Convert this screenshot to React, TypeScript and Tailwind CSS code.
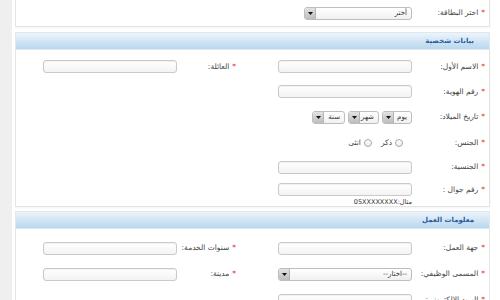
import React from "react";

function Star() {
  return <span className="ml-[3px] text-[#e0302c]">*</span>;
}

function Label({ text, className = "" }: { text: string; className?: string }) {
  return (
    <div className={`flex shrink-0 items-center text-[7.5px] text-[#444] ${className}`}>
      <Star />
      <span>{text}</span>
    </div>
  );
}

function TextInput({ width = "w-[134px]" }: { width?: string }) {
  return (
    <div
      className={`h-[13px] ${width} rounded-[3px] border border-[#c9c9c9] bg-gradient-to-b from-white to-[#f3f3f3] shadow-[inset_0_1px_1px_rgba(0,0,0,0.06)]`}
    />
  );
}

function Select({ text, width }: { text: string; width: string }) {
  return (
    <div
      className={`flex h-[13px] ${width} items-stretch overflow-hidden rounded-[3px] border border-[#bdbdbd] bg-gradient-to-b from-white to-[#f1f1f1]`}
    >
      <div className="flex-1 truncate pr-[4px] text-right text-[7px] leading-[11px] text-[#333]">{text}</div>
      <div className="flex w-[11px] items-center justify-center border-r border-[#b5b5b5] bg-gradient-to-b from-[#e2e2e2] to-[#bdbdbd]">
        <svg width="5" height="3" viewBox="0 0 5 3">
          <path d="M0 0h5L2.5 3z" fill="#111" />
        </svg>
      </div>
    </div>
  );
}

function Radio({ text }: { text: string }) {
  return (
    <div className="flex items-center gap-[3px]">
      <div className="h-[8px] w-[8px] rounded-full border border-[#a9a9a9] bg-gradient-to-b from-white to-[#ececec]" />
      <span className="text-[7.5px] text-[#444]">{text}</span>
    </div>
  );
}

function Header({ title }: { title: string }) {
  return (
    <div className="flex h-[18px] items-center border border-[#dfe8f0] bg-gradient-to-b from-[#edf4fb] to-[#b8d7ee] pr-[15px]">
      <span className="text-[7px] font-bold text-[#2a5d9f]">{title}</span>
    </div>
  );
}

function Row({ children, className = "h-[25px]" }: { children: React.ReactNode; className?: string }) {
  return <div className={`flex items-center ${className}`}>{children}</div>;
}

export default function App() {
  return (
    <div
      dir="rtl"
      className="flex h-[300px] w-[500px] overflow-hidden bg-white"
      style={{ fontFamily: '"DejaVu Sans", Tahoma, sans-serif' }}
    >
      <div className="w-[10px] shrink-0" />
      <div className="flex w-[475px] shrink-0 flex-col">
        <div className="h-[27px] border border-t-0 border-[#e4e4e4] shadow-[0_1px_2px_rgba(0,0,0,0.05)]">
          <Row className="h-[27px] pb-[1px]">
            <Label text="اختر البطاقة:" className="w-[77px] pr-[4px]" />
            <Select text="أختر" width="w-[108px]" />
          </Row>
        </div>

        <div className="mt-[5px]">
          <Header title="بيانات شخصية" />
        </div>

        <div className="h-[162px] border border-t-0 border-[#e4e4e4] pt-[4px] shadow-[0_1px_2px_rgba(0,0,0,0.05)]">
          <Row>
            <Label text="الاسم الأول:" className="w-[77px] pr-[4px]" />
            <TextInput />
            <Label text="العائلة:" className="w-[101px] pr-[42px]" />
            <TextInput />
          </Row>
          <Row>
            <Label text="رقم الهوية:" className="w-[77px] pr-[4px]" />
            <TextInput />
          </Row>
          <Row className="h-[26px]">
            <Label text="تاريخ الميلاد:" className="w-[77px] pr-[4px]" />
            <div className="flex gap-[3px]">
              <Select text="يوم" width="w-[30px]" />
              <Select text="شهر" width="w-[31px]" />
              <Select text="سنة" width="w-[33px]" />
            </div>
          </Row>
          <Row>
            <Label text="الجنس:" className="w-[86px] pr-[4px]" />
            <div className="flex gap-[9px]">
              <Radio text="ذكر" />
              <Radio text="انثى" />
            </div>
          </Row>
          <Row className="h-[24px]">
            <Label text="الجنسية:" className="w-[77px] pr-[4px]" />
            <TextInput />
          </Row>
          <div className="flex pt-[4px]">
            <Label text="رقم جوال :" className="h-[13px] w-[77px] pr-[4px]" />
            <div className="flex flex-col">
              <TextInput />
              <span className="mt-[2px] text-[6.5px] leading-[8px] text-[#333]">مثال:05XXXXXXXX</span>
            </div>
          </div>
        </div>

        <div className="mt-[4px]">
          <Header title="معلومات العمل" />
        </div>

        <div className="flex-1 border border-t-0 border-[#e4e4e4] pt-[6px]">
          <Row className="h-[26px]">
            <Label text="جهة العمل:" className="w-[77px] pr-[4px]" />
            <TextInput />
            <Label text="سنوات الخدمة:" className="w-[101px] pr-[42px]" />
            <TextInput />
          </Row>
          <Row className="h-[26px]">
            <Label text="المسمى الوظيفي:" className="w-[77px] pr-[4px]" />
            <Select text="--اختار--" width="w-[134px]" />
            <Label text="مدينة:" className="w-[101px] pr-[42px]" />
            <TextInput />
          </Row>
          <Row className="h-[26px]">
            <Label text="البريد الإلكتروني:" className="w-[77px] pr-[4px]" />
            <TextInput />
          </Row>
        </div>
      </div>
      <div className="w-[15px] shrink-0 border-r-[3px] border-white bg-[#efefef]" />
    </div>
  );
}
